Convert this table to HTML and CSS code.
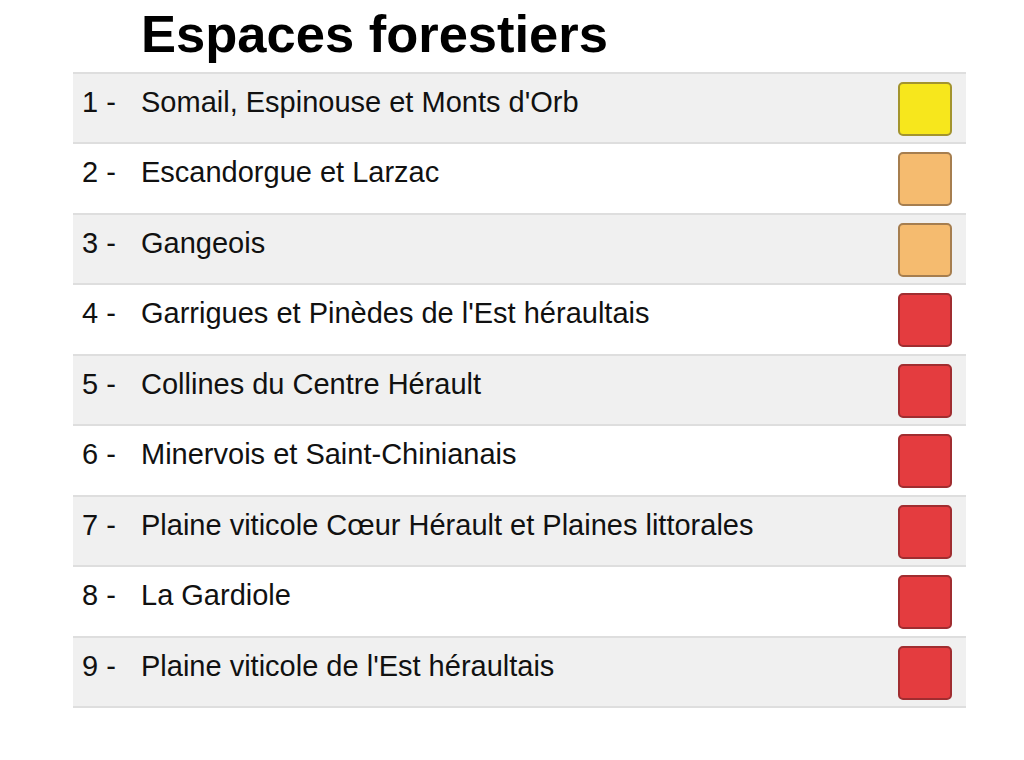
FILE: index.html
```html
<!DOCTYPE html>
<html lang="fr">
<head>
<meta charset="utf-8">
<title>Espaces forestiers</title>
<link rel="stylesheet" href="styles.css">
</head>
<body>
<main class="panel">
  <h1 class="title">Espaces forestiers</h1>
  <ul class="list">
    <li class="row"><span class="num">1 -</span><span class="name">Somail, Espinouse et Monts d'Orb</span><span class="swatch swatch-yellow"></span></li>
    <li class="row"><span class="num">2 -</span><span class="name">Escandorgue et Larzac</span><span class="swatch swatch-orange"></span></li>
    <li class="row"><span class="num">3 -</span><span class="name">Gangeois</span><span class="swatch swatch-orange"></span></li>
    <li class="row"><span class="num">4 -</span><span class="name">Garrigues et Pinèdes de l'Est héraultais</span><span class="swatch swatch-red"></span></li>
    <li class="row"><span class="num">5 -</span><span class="name">Collines du Centre Hérault</span><span class="swatch swatch-red"></span></li>
    <li class="row"><span class="num">6 -</span><span class="name">Minervois et Saint-Chinianais</span><span class="swatch swatch-red"></span></li>
    <li class="row"><span class="num">7 -</span><span class="name">Plaine viticole Cœur Hérault et Plaines littorales</span><span class="swatch swatch-red"></span></li>
    <li class="row"><span class="num">8 -</span><span class="name">La Gardiole</span><span class="swatch swatch-red"></span></li>
    <li class="row"><span class="num">9 -</span><span class="name">Plaine viticole de l'Est héraultais</span><span class="swatch swatch-red"></span></li>
  </ul>
</main>
</body>
</html>
```
FILE: styles.css
```css
html, body {
  margin: 0;
  padding: 0;
  background: #ffffff;
}
body {
  font-family: "Liberation Sans", Arial, Helvetica, sans-serif;
  color: #111111;
}
.panel {
  width: 893px;
  margin-left: 73px;
}
.title {
  margin: 0;
  padding: 4px 0 0 68px;
  height: 72px;
  box-sizing: border-box;
  font-size: 52.5px;
  line-height: 60px;
  font-weight: bold;
  color: #000000;
}
.list {
  list-style: none;
  margin: 0;
  padding: 0;
  border-bottom: 2px solid #dedede;
}
.row {
  display: flex;
  align-items: flex-start;
  box-sizing: border-box;
  height: 70.45px;
  border-top: 2px solid #dedede;
  padding: 12px 14px 0 9px;
  background: #ffffff;
}
.row:nth-child(odd) {
  background: #f0f0f0;
}
.num {
  width: 59px;
  flex: none;
  font-size: 29px;
  line-height: 33px;
}
.name {
  flex: 1;
  font-size: 29px;
  line-height: 33px;
}
.swatch {
  flex: none;
  width: 54px;
  height: 54px;
  box-sizing: border-box;
  border-radius: 5px;
  border: 2px solid;
  margin-top: -4px;
}
.swatch-yellow {
  background: #f7e71c;
  border-color: #a3942e;
}
.swatch-orange {
  background: #f5bb6f;
  border-color: #a67e4f;
}
.swatch-red {
  background: #e43c3f;
  border-color: #a02d30;
}
```
